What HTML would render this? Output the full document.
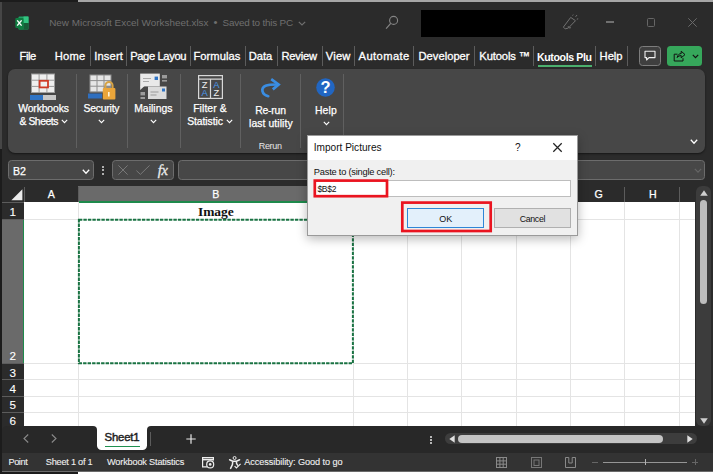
<!DOCTYPE html>
<html><head><meta charset="utf-8"><title>Excel - Import Pictures</title>
<style>
html,body{margin:0;padding:0;background:#1b1b1b;}
#root{position:relative;width:715px;height:474px;overflow:hidden;background:#262626;font-family:"Liberation Sans",sans-serif;}
.t{position:absolute;white-space:nowrap;line-height:1;transform:translateY(-50%);}
.r{position:absolute;box-sizing:border-box;}
svg{position:absolute;overflow:visible;}
</style></head><body><div id="root">
<div class="r" style="left:0.0px;top:0.0px;width:715.0px;height:474.0px;background:#1c1c1c;"></div>
<div class="r" style="left:0.0px;top:2.0px;width:2.0px;height:147.0px;background:#464646;"></div>
<div class="r" style="left:78.0px;top:0.0px;width:637.0px;height:1.8px;background:#a6a6a6;"></div>
<div class="r" style="left:78.0px;top:471.0px;width:637.0px;height:3.0px;background:#ffffff;"></div>
<div class="r" style="left:712.6px;top:0.0px;width:2.4px;height:474.0px;background:#ffffff;"></div>
<div class="r" style="left:2.0px;top:2.0px;width:710.6px;height:469.0px;background:#2b2b2b;"></div>
<svg style="left:14.5px;top:15.5px" width="14" height="14" viewBox="0 0 14 14">
<rect x="3.5" y="0.5" width="10" height="13" rx="1" fill="#21a366"/>
<rect x="8.5" y="0.5" width="5" height="6.5" fill="#33c481"/>
<rect x="3.5" y="7" width="5" height="6.5" fill="#107c41"/>
<rect x="8.5" y="7" width="5" height="6.5" fill="#185c37"/>
<rect x="0.3" y="2" width="8.2" height="10" rx="1" fill="#107c41"/>
<path d="M2.2 4.4 L6.6 9.6 M6.6 4.4 L2.2 9.6" stroke="#fff" stroke-width="1.4" fill="none"/>
</svg>
<span class="t" style="left:49.2px;top:22.8px;font-size:9.90px;color:#6f6f6f;font-weight:400;font-family:'Liberation Sans', sans-serif;letter-spacing:0.01px;">New Microsoft Excel Worksheet.xlsx</span>
<span class="t" style="left:213.5px;top:22.8px;font-size:11.42px;color:#6f6f6f;font-weight:400;font-family:'Liberation Sans', sans-serif;">•</span>
<span class="t" style="left:222.5px;top:22.8px;font-size:9.90px;color:#6f6f6f;font-weight:400;font-family:'Liberation Sans', sans-serif;letter-spacing:-0.20px;">Saved to this PC</span>
<svg style="left:298px;top:20.5px" width="8" height="5" viewBox="0 0 8 5"><path d="M0.8 0.8 L4 4 L7.2 0.8" stroke="#6f6f6f" stroke-width="1.2" fill="none"/></svg>
<svg style="left:385px;top:15px" width="14" height="14" viewBox="0 0 14 14"><circle cx="8.6" cy="5.4" r="4" stroke="#858585" stroke-width="1.1" fill="none"/><path d="M5.7 8.3 L1.1 13.6" stroke="#858585" stroke-width="1.2"/></svg>
<div class="r" style="left:420.6px;top:10.2px;width:124.2px;height:26.6px;background:#000;"></div>
<svg style="left:0;top:0" width="715" height="474"><g stroke="#727272" stroke-width="1" fill="none" stroke-linejoin="round"><path d="M570.7 17.4 L575.5 20.7 L568.4 28 L565.2 28.9 L563.4 27.1 Z"/><path d="M568.2 26.2 a1.6 1.6 0 0 0 2.8 1.2"/><path d="M572.6 15.6 L573.2 14.6 M575.6 16.8 L577 15 M576.8 19.2 L578.2 18.8"/></g></svg>
<div class="r" style="left:606.0px;top:21.4px;width:8.4px;height:1.4px;background:#707070;"></div>
<div class="r" style="left:646.5px;top:18.3px;width:8.5px;height:8.5px;background:transparent;border:1px solid #666;border-radius:1.5px;"></div>
<svg style="left:687.5px;top:18px" width="9" height="9" viewBox="0 0 9 9"><path d="M0.3 0.3 L8.7 8.7 M8.7 0.3 L0.3 8.7" stroke="#6a6a6a" stroke-width="1"/></svg>
<span class="t" style="left:19.5px;top:56.6px;font-size:11.20px;color:#ffffff;font-weight:400;font-family:'Liberation Sans', sans-serif;letter-spacing:-0.42px;-webkit-text-stroke:0.3px #fff;">File</span>
<span class="t" style="left:54.7px;top:56.6px;font-size:11.20px;color:#ffffff;font-weight:400;font-family:'Liberation Sans', sans-serif;letter-spacing:0.24px;-webkit-text-stroke:0.3px #fff;">Home</span>
<span class="t" style="left:94.3px;top:56.6px;font-size:11.20px;color:#ffffff;font-weight:400;font-family:'Liberation Sans', sans-serif;letter-spacing:0.12px;-webkit-text-stroke:0.3px #fff;">Insert</span>
<span class="t" style="left:130.2px;top:56.6px;font-size:11.20px;color:#ffffff;font-weight:400;font-family:'Liberation Sans', sans-serif;letter-spacing:-0.38px;-webkit-text-stroke:0.3px #fff;">Page Layou</span>
<span class="t" style="left:193.5px;top:56.6px;font-size:11.20px;color:#ffffff;font-weight:400;font-family:'Liberation Sans', sans-serif;letter-spacing:0.03px;-webkit-text-stroke:0.3px #fff;">Formulas</span>
<span class="t" style="left:248.8px;top:56.6px;font-size:11.20px;color:#ffffff;font-weight:400;font-family:'Liberation Sans', sans-serif;letter-spacing:-0.05px;-webkit-text-stroke:0.3px #fff;">Data</span>
<span class="t" style="left:281.4px;top:56.6px;font-size:11.20px;color:#ffffff;font-weight:400;font-family:'Liberation Sans', sans-serif;letter-spacing:-0.22px;-webkit-text-stroke:0.3px #fff;">Review</span>
<span class="t" style="left:325.7px;top:56.6px;font-size:11.20px;color:#ffffff;font-weight:400;font-family:'Liberation Sans', sans-serif;letter-spacing:0.24px;-webkit-text-stroke:0.3px #fff;">View</span>
<span class="t" style="left:358.6px;top:56.6px;font-size:11.20px;color:#ffffff;font-weight:400;font-family:'Liberation Sans', sans-serif;letter-spacing:0.39px;-webkit-text-stroke:0.3px #fff;">Automate</span>
<span class="t" style="left:418.5px;top:56.6px;font-size:11.20px;color:#ffffff;font-weight:400;font-family:'Liberation Sans', sans-serif;letter-spacing:0.01px;-webkit-text-stroke:0.3px #fff;">Developer</span>
<span class="t" style="left:479.3px;top:56.6px;font-size:11.20px;color:#ffffff;font-weight:400;font-family:'Liberation Sans', sans-serif;letter-spacing:-0.12px;-webkit-text-stroke:0.3px #fff;">Kutools ™</span>
<span class="t" style="left:599.6px;top:56.6px;font-size:11.20px;color:#ffffff;font-weight:400;font-family:'Liberation Sans', sans-serif;letter-spacing:-0.04px;-webkit-text-stroke:0.3px #fff;">Help</span>
<span class="t" style="left:537.0px;top:56.6px;font-size:10.60px;color:#ffffff;font-weight:700;font-family:'Liberation Sans', sans-serif;letter-spacing:-0.39px;">Kutools Plu</span>
<div class="r" style="left:537.5px;top:65.2px;width:54.5px;height:1.8px;background:#4caf6e;"></div>
<div class="r" style="left:90.1px;top:46.0px;width:1.0px;height:19.5px;background:#5c5c5c;"></div>
<div class="r" style="left:126.4px;top:46.0px;width:1.0px;height:19.5px;background:#5c5c5c;"></div>
<div class="r" style="left:189.7px;top:46.0px;width:1.0px;height:19.5px;background:#5c5c5c;"></div>
<div class="r" style="left:244.5px;top:46.0px;width:1.0px;height:19.5px;background:#5c5c5c;"></div>
<div class="r" style="left:276.8px;top:46.0px;width:1.0px;height:19.5px;background:#5c5c5c;"></div>
<div class="r" style="left:321.5px;top:46.0px;width:1.0px;height:19.5px;background:#5c5c5c;"></div>
<div class="r" style="left:354.1px;top:46.0px;width:1.0px;height:19.5px;background:#5c5c5c;"></div>
<div class="r" style="left:413.1px;top:46.0px;width:1.0px;height:19.5px;background:#5c5c5c;"></div>
<div class="r" style="left:474.4px;top:46.0px;width:1.0px;height:19.5px;background:#5c5c5c;"></div>
<div class="r" style="left:533.0px;top:46.0px;width:1.0px;height:19.5px;background:#5c5c5c;"></div>
<div class="r" style="left:594.5px;top:46.0px;width:1.0px;height:19.5px;background:#5c5c5c;"></div>
<div class="r" style="left:627.2px;top:46.0px;width:1.0px;height:19.5px;background:#5c5c5c;"></div>
<div class="r" style="left:638.5px;top:45.6px;width:22.0px;height:20.2px;background:#3f3f3f;border:1px solid #7d7d7d;border-radius:3.5px;"></div>
<svg style="left:643.5px;top:50px" width="12" height="12" viewBox="0 0 12 12"><path d="M1 1.2 H11 V7.6 H5 L2.6 10 V7.6 H1 Z" stroke="#f0f0f0" stroke-width="1.1" fill="none" stroke-linejoin="round"/></svg>
<div class="r" style="left:667.2px;top:45.6px;width:35.1px;height:20.2px;background:#36a75b;border-radius:3.5px;"></div>
<svg style="left:673px;top:49.5px" width="13" height="12" viewBox="0 0 13 12"><path d="M4.5 4.2 H1.2 V11 H10 V8.2 M4.2 7.6 C4.6 5 6.2 3.6 8.2 3.5 V1.2 L12 4.6 L8.2 7.8 V5.6 C6.6 5.6 5.2 6.2 4.2 7.6 Z" stroke="#111" stroke-width="1" fill="none" stroke-linejoin="round"/></svg>
<svg style="left:691.5px;top:54px" width="7" height="5" viewBox="0 0 7 5"><path d="M0.8 0.8 L3.5 3.6 L6.2 0.8" stroke="#111" stroke-width="1.2" fill="none"/></svg>
<div class="r" style="left:8.0px;top:69.2px;width:697.0px;height:83.6px;background:#474747;border-radius:7px;box-shadow:0 1px 2px rgba(0,0,0,.5);"></div>
<div class="r" style="left:75.5px;top:74.0px;width:1.0px;height:74.0px;background:#606060;"></div>
<div class="r" style="left:127.0px;top:74.0px;width:1.0px;height:74.0px;background:#606060;"></div>
<div class="r" style="left:179.5px;top:74.0px;width:1.0px;height:74.0px;background:#606060;"></div>
<div class="r" style="left:240.0px;top:74.0px;width:1.0px;height:74.0px;background:#606060;"></div>
<div class="r" style="left:300.0px;top:74.0px;width:1.0px;height:74.0px;background:#606060;"></div>
<div class="r" style="left:343.3px;top:74.0px;width:1.0px;height:74.0px;background:#606060;"></div>
<svg style="left:30px;top:73px" width="26" height="27" viewBox="0 0 26 27">
<rect x="1" y="0.5" width="24" height="19.5" fill="#9a9a9a"/>
<g fill="#efefef">
<rect x="2" y="1.5" width="6.6" height="5.2"/><rect x="9.6" y="1.5" width="6.8" height="5.2"/><rect x="17.4" y="1.5" width="6.6" height="5.2"/>
<rect x="2" y="7.7" width="6.6" height="5.2"/><rect x="9.6" y="7.7" width="6.8" height="5.2"/><rect x="17.4" y="7.7" width="6.6" height="5.2"/>
<rect x="2" y="13.9" width="6.6" height="5.2"/><rect x="9.6" y="13.9" width="6.8" height="5.2"/><rect x="17.4" y="13.9" width="6.6" height="5.2"/>
</g>
<rect x="9.6" y="7.8" width="8.4" height="6.6" fill="#f0f0f0" stroke="#cf3a25" stroke-width="1.8"/>
<rect x="0" y="22" width="13" height="5" fill="#2f74c5"/>
<rect x="13" y="22" width="13" height="5" fill="#c8c8c8"/>
</svg>
<span class="t" style="left:18.2px;top:108.6px;font-size:10.40px;color:#fff;font-weight:400;font-family:'Liberation Sans', sans-serif;letter-spacing:-0.13px;-webkit-text-stroke:0.25px #fff;">Workbooks</span>
<span class="t" style="left:19.5px;top:122.0px;font-size:10.40px;color:#fff;font-weight:400;font-family:'Liberation Sans', sans-serif;letter-spacing:-0.46px;-webkit-text-stroke:0.25px #fff;">&amp; Sheets</span>
<svg style="left:61px;top:119.3px" width="7" height="5" viewBox="0 0 7 5"><path d="M0.8 0.8 L3.5 3.6 L6.2 0.8" stroke="#fff" stroke-width="1.1" fill="none"/></svg>
<svg style="left:88px;top:74px" width="28" height="27" viewBox="0 0 28 27">
<rect x="1.5" y="0.5" width="22" height="18" fill="#8d8d8d"/>
<g fill="#e6e6e6">
<rect x="2.5" y="1.5" width="6" height="4.6"/><rect x="9.5" y="1.5" width="6" height="4.6"/><rect x="16.5" y="1.5" width="6" height="4.6"/>
<rect x="2.5" y="7.1" width="6" height="4.6"/><rect x="9.5" y="7.1" width="6" height="4.6"/><rect x="16.5" y="7.1" width="6" height="4.6"/>
<rect x="2.5" y="12.7" width="6" height="4.6"/><rect x="9.5" y="12.7" width="6" height="4.6"/>
</g>
<rect x="0" y="19.5" width="14" height="5" fill="#2f6fbf"/>
<path d="M17.4 15 V11.6 a3.6 3.6 0 0 1 7.2 0 V15" stroke="#d6a345" stroke-width="2" fill="none"/>
<rect x="14.8" y="14" width="12.6" height="11.6" rx="1" fill="#eaa53a"/>
<rect x="20" y="18" width="1.6" height="4.5" fill="#fff3d6"/>
</svg>
<span class="t" style="left:83.5px;top:108.6px;font-size:10.40px;color:#fff;font-weight:400;font-family:'Liberation Sans', sans-serif;letter-spacing:-0.22px;-webkit-text-stroke:0.25px #fff;">Security</span>
<svg style="left:98px;top:119.3px" width="7" height="5" viewBox="0 0 7 5"><path d="M0.8 0.8 L3.5 3.6 L6.2 0.8" stroke="#fff" stroke-width="1.1" fill="none"/></svg>
<svg style="left:139px;top:73px" width="29" height="28" viewBox="0 0 29 28">
<rect x="1.2" y="0.6" width="19.6" height="12.8" fill="#e9e9e9"/>
<path d="M1.2 13 V17 L5.5 13 Z" fill="#e9e9e9"/>
<rect x="15.6" y="3.6" width="3.4" height="3.4" fill="#2f74c5"/>
<rect x="4" y="5" width="8" height="1" fill="#aaa"/><rect x="4" y="8" width="6" height="1" fill="#aaa"/>
<rect x="23" y="2" width="5" height="3.4" fill="#9b9b9b"/><rect x="23" y="7" width="5" height="1.6" fill="#9b9b9b"/>
<rect x="9" y="13.5" width="18.5" height="12.5" fill="#dcdcdc"/>
<rect x="23" y="15.5" width="3" height="3" fill="#2f74c5"/>
<rect x="11.5" y="18.5" width="8" height="1" fill="#999"/><rect x="11.5" y="21.5" width="6" height="1" fill="#999"/>
<rect x="1.5" y="19" width="4.5" height="3.4" fill="#9b9b9b"/><rect x="1.5" y="24" width="4.5" height="2" fill="#9b9b9b"/>
</svg>
<span class="t" style="left:134.2px;top:108.6px;font-size:10.40px;color:#fff;font-weight:400;font-family:'Liberation Sans', sans-serif;letter-spacing:0.02px;-webkit-text-stroke:0.25px #fff;">Mailings</span>
<svg style="left:149.5px;top:119.3px" width="7" height="5" viewBox="0 0 7 5"><path d="M0.8 0.8 L3.5 3.6 L6.2 0.8" stroke="#fff" stroke-width="1.1" fill="none"/></svg>
<svg style="left:197.5px;top:74.5px" width="25" height="24" viewBox="0 0 25 24">
<rect x="0.6" y="0.6" width="23.8" height="22.8" fill="none" stroke="#d8d8d8" stroke-width="1.2"/>
<path d="M0.6 4.2 H24.4 M12.5 4.2 V23.4" stroke="#d8d8d8" stroke-width="1.2"/>
<text x="6.6" y="12.6" font-family="Liberation Sans, sans-serif" font-size="9.4" fill="#f0f0f0" text-anchor="middle">Z</text>
<text x="18.4" y="12.6" font-family="Liberation Sans, sans-serif" font-size="9.4" fill="#4a9bf0" text-anchor="middle">A</text>
<text x="6.6" y="21.4" font-family="Liberation Sans, sans-serif" font-size="9.4" fill="#4a9bf0" text-anchor="middle">A</text>
<text x="18.4" y="21.4" font-family="Liberation Sans, sans-serif" font-size="9.4" fill="#f0f0f0" text-anchor="middle">Z</text>
</svg>
<span class="t" style="left:193.2px;top:108.6px;font-size:10.40px;color:#fff;font-weight:400;font-family:'Liberation Sans', sans-serif;letter-spacing:0.08px;-webkit-text-stroke:0.25px #fff;">Filter &amp;</span>
<span class="t" style="left:187.2px;top:122.0px;font-size:10.40px;color:#fff;font-weight:400;font-family:'Liberation Sans', sans-serif;letter-spacing:-0.08px;-webkit-text-stroke:0.25px #fff;">Statistic</span>
<svg style="left:225.5px;top:119.3px" width="7" height="5" viewBox="0 0 7 5"><path d="M0.8 0.8 L3.5 3.6 L6.2 0.8" stroke="#fff" stroke-width="1.1" fill="none"/></svg>
<svg style="left:0;top:0" width="715" height="474"><g stroke="#3a8de2" fill="none" stroke-width="2.7"><path d="M268.2 96.2 C261.6 94.6 260.4 88.2 265.6 85.8 C268.6 84.5 272 84.5 277 84.5" stroke-linecap="round"/><path d="M271.2 79.2 L278.6 84.5 L272.8 89.4" stroke-linejoin="miter"/></g></svg>
<span class="t" style="left:255.2px;top:110.6px;font-size:10.40px;color:#fff;font-weight:400;font-family:'Liberation Sans', sans-serif;letter-spacing:-0.20px;-webkit-text-stroke:0.25px #fff;">Re-run</span>
<span class="t" style="left:249.0px;top:124.2px;font-size:10.40px;color:#fff;font-weight:400;font-family:'Liberation Sans', sans-serif;letter-spacing:0.08px;-webkit-text-stroke:0.25px #fff;">last utility</span>
<span class="t" style="left:258.7px;top:145.6px;font-size:9.00px;color:#e6e6e6;font-weight:400;font-family:'Liberation Sans', sans-serif;letter-spacing:-0.30px;">Rerun</span>
<svg style="left:316px;top:77.8px" width="19" height="19" viewBox="0 0 19 19">
<circle cx="9.5" cy="9.5" r="9.3" fill="#2166c2"/>
<text x="9.5" y="15.4" font-family="Liberation Sans, sans-serif" font-size="16.5" font-weight="700" fill="#fff" text-anchor="middle">?</text>
</svg>
<span class="t" style="left:315.0px;top:110.6px;font-size:10.40px;color:#fff;font-weight:400;font-family:'Liberation Sans', sans-serif;letter-spacing:0.10px;-webkit-text-stroke:0.25px #fff;">Help</span>
<svg style="left:322.5px;top:121px" width="7" height="5" viewBox="0 0 7 5"><path d="M0.8 0.8 L3.5 3.6 L6.2 0.8" stroke="#fff" stroke-width="1.1" fill="none"/></svg>
<svg style="left:689.5px;top:138.5px" width="8" height="6" viewBox="0 0 8 6"><path d="M0.8 0.8 L4 4.2 L7.2 0.8" stroke="#fff" stroke-width="1.3" fill="none"/></svg>
<div class="r" style="left:8.4px;top:160.3px;width:86.1px;height:20.2px;background:#474747;border:1px solid #6c6c6c;border-radius:3.5px;"></div>
<span class="t" style="left:13.0px;top:171.0px;font-size:10.60px;color:#fff;font-weight:400;font-family:'Liberation Sans', sans-serif;letter-spacing:0.03px;-webkit-text-stroke:0.25px #fff;">B2</span>
<svg style="left:82px;top:168.5px" width="8" height="6" viewBox="0 0 8 6"><path d="M0.8 0.8 L4 4.2 L7.2 0.8" stroke="#fff" stroke-width="1.3" fill="none"/></svg>
<div class="r" style="left:102.4px;top:165.8px;width:2.0px;height:2.0px;background:#dcdcdc;border-radius:1px;"></div>
<div class="r" style="left:102.4px;top:169.4px;width:2.0px;height:2.0px;background:#dcdcdc;border-radius:1px;"></div>
<div class="r" style="left:102.4px;top:173.0px;width:2.0px;height:2.0px;background:#dcdcdc;border-radius:1px;"></div>
<div class="r" style="left:112.0px;top:160.3px;width:62.4px;height:20.2px;background:#474747;border:1px solid #6c6c6c;border-radius:3.5px;"></div>
<svg style="left:117.6px;top:165.3px" width="10" height="10" viewBox="0 0 10 10"><path d="M0.4 0.4 L9.6 9.6 M9.6 0.4 L0.4 9.6" stroke="#787878" stroke-width="1"/></svg>
<svg style="left:136px;top:165.3px" width="14" height="10" viewBox="0 0 14 10"><path d="M0.4 5.6 L4.4 9.4 L13.6 0.4" stroke="#787878" stroke-width="1" fill="none"/></svg>
<span class="t" style="left:157.8px;top:169.8px;font-size:14.50px;color:#ececec;font-weight:400;font-family:'Liberation Serif', serif;letter-spacing:-0.28px;font-style:italic;-webkit-text-stroke:0.3px #ececec;">fx</span>
<div class="r" style="left:178.2px;top:160.3px;width:526.6px;height:20.2px;background:#474747;border:1px solid #6c6c6c;border-radius:3.5px;"></div>
<svg style="left:693.5px;top:167.5px" width="8" height="6" viewBox="0 0 8 6"><path d="M0.8 0.8 L4 4.2 L7.2 0.8" stroke="#666" stroke-width="1.1" fill="none"/></svg>
<div class="r" style="left:24.4px;top:202.0px;width:670.5px;height:223.6px;background:#ffffff;"></div>
<div class="r" style="left:2.0px;top:185.7px;width:692.9px;height:16.3px;background:#2b2b2b;"></div>
<div class="r" style="left:78.3px;top:185.7px;width:274.7px;height:16.3px;background:#6a6a6a;"></div>
<div class="r" style="left:78.3px;top:201.0px;width:274.7px;height:1.6px;background:#1e8a4c;"></div>
<svg style="left:10px;top:188.5px" width="13" height="12" viewBox="0 0 13 12"><path d="M12.4 0.3 V11.2 H1.4 Z" fill="#ebebeb"/></svg>
<div class="r" style="left:23.9px;top:187.0px;width:1.0px;height:15.0px;background:#5c5c5c;"></div>
<div class="r" style="left:77.8px;top:187.0px;width:1.0px;height:15.0px;background:#5c5c5c;"></div>
<div class="r" style="left:352.5px;top:187.0px;width:1.0px;height:15.0px;background:#5c5c5c;"></div>
<div class="r" style="left:406.9px;top:187.0px;width:1.0px;height:15.0px;background:#5c5c5c;"></div>
<div class="r" style="left:461.2px;top:187.0px;width:1.0px;height:15.0px;background:#5c5c5c;"></div>
<div class="r" style="left:515.6px;top:187.0px;width:1.0px;height:15.0px;background:#5c5c5c;"></div>
<div class="r" style="left:570.0px;top:187.0px;width:1.0px;height:15.0px;background:#5c5c5c;"></div>
<div class="r" style="left:624.4px;top:187.0px;width:1.0px;height:15.0px;background:#5c5c5c;"></div>
<div class="r" style="left:678.7px;top:187.0px;width:1.0px;height:15.0px;background:#5c5c5c;"></div>
<span class="t" style="left:41.3px;width:20px;text-align:center;top:194.3px;font-size:10.6px;color:#fff;-webkit-text-stroke:0.25px #fff">A</span>
<span class="t" style="left:205.8px;width:20px;text-align:center;top:194.3px;font-size:10.6px;color:#fff;-webkit-text-stroke:0.25px #fff">B</span>
<span class="t" style="left:588.6px;width:20px;text-align:center;top:194.3px;font-size:10.6px;color:#fff;-webkit-text-stroke:0.25px #fff">G</span>
<span class="t" style="left:642.8px;width:20px;text-align:center;top:194.3px;font-size:10.6px;color:#fff;-webkit-text-stroke:0.25px #fff">H</span>
<div class="r" style="left:2.0px;top:202.0px;width:22.4px;height:223.6px;background:#2b2b2b;"></div>
<div class="r" style="left:2.0px;top:219.0px;width:22.4px;height:144.6px;background:#6a6a6a;"></div>
<div class="r" style="left:23.0px;top:219.0px;width:1.4px;height:144.6px;background:#1e8a4c;"></div>
<div class="r" style="left:2.0px;top:201.5px;width:22.4px;height:1.0px;background:#5c5c5c;"></div>
<div class="r" style="left:2.0px;top:218.5px;width:22.4px;height:1.0px;background:#5c5c5c;"></div>
<div class="r" style="left:2.0px;top:363.1px;width:22.4px;height:1.0px;background:#5c5c5c;"></div>
<div class="r" style="left:2.0px;top:379.3px;width:22.4px;height:1.0px;background:#5c5c5c;"></div>
<div class="r" style="left:2.0px;top:395.6px;width:22.4px;height:1.0px;background:#5c5c5c;"></div>
<div class="r" style="left:2.0px;top:411.8px;width:22.4px;height:1.0px;background:#5c5c5c;"></div>
<span class="t" style="left:9.4px;top:212.4px;font-size:11.69px;color:#fff;font-weight:400;font-family:'Liberation Sans', sans-serif;-webkit-text-stroke:0.1px #fff;">1</span>
<span class="t" style="left:9.4px;top:356.2px;font-size:11.69px;color:#fff;font-weight:400;font-family:'Liberation Sans', sans-serif;-webkit-text-stroke:0.1px #fff;">2</span>
<span class="t" style="left:9.4px;top:372.6px;font-size:11.69px;color:#fff;font-weight:400;font-family:'Liberation Sans', sans-serif;-webkit-text-stroke:0.1px #fff;">3</span>
<span class="t" style="left:9.4px;top:388.8px;font-size:11.69px;color:#fff;font-weight:400;font-family:'Liberation Sans', sans-serif;-webkit-text-stroke:0.1px #fff;">4</span>
<span class="t" style="left:9.4px;top:405.2px;font-size:11.69px;color:#fff;font-weight:400;font-family:'Liberation Sans', sans-serif;-webkit-text-stroke:0.1px #fff;">5</span>
<span class="t" style="left:9.4px;top:421.4px;font-size:11.69px;color:#fff;font-weight:400;font-family:'Liberation Sans', sans-serif;-webkit-text-stroke:0.1px #fff;">6</span>
<div class="r" style="left:77.8px;top:202.0px;width:1.0px;height:223.6px;background:#e4e4e4;"></div>
<div class="r" style="left:352.5px;top:202.0px;width:1.0px;height:223.6px;background:#e4e4e4;"></div>
<div class="r" style="left:406.9px;top:202.0px;width:1.0px;height:223.6px;background:#e4e4e4;"></div>
<div class="r" style="left:461.2px;top:202.0px;width:1.0px;height:223.6px;background:#e4e4e4;"></div>
<div class="r" style="left:515.6px;top:202.0px;width:1.0px;height:223.6px;background:#e4e4e4;"></div>
<div class="r" style="left:570.0px;top:202.0px;width:1.0px;height:223.6px;background:#e4e4e4;"></div>
<div class="r" style="left:624.4px;top:202.0px;width:1.0px;height:223.6px;background:#e4e4e4;"></div>
<div class="r" style="left:678.7px;top:202.0px;width:1.0px;height:223.6px;background:#e4e4e4;"></div>
<div class="r" style="left:24.4px;top:218.5px;width:670.5px;height:1.0px;background:#e4e4e4;"></div>
<div class="r" style="left:24.4px;top:363.1px;width:670.5px;height:1.0px;background:#e4e4e4;"></div>
<div class="r" style="left:24.4px;top:379.3px;width:670.5px;height:1.0px;background:#e4e4e4;"></div>
<div class="r" style="left:24.4px;top:395.6px;width:670.5px;height:1.0px;background:#e4e4e4;"></div>
<div class="r" style="left:24.4px;top:411.8px;width:670.5px;height:1.0px;background:#e4e4e4;"></div>
<span class="t" style="left:197.9px;top:212.0px;font-size:13.47px;color:#111;font-weight:700;font-family:'Liberation Serif', serif;">Image</span>
<svg style="left:0;top:0" width="715" height="474"><rect x="78.9" y="219.7" width="274" height="143.6" fill="#fff" stroke="#1a7343" stroke-width="2" stroke-dasharray="3.4 1.1"/></svg>
<div class="r" style="left:696.0px;top:186.2px;width:15.0px;height:240.2px;background:#3c3c3c;border-radius:6px;"></div>
<svg style="left:699.7px;top:190px" width="8" height="6" viewBox="0 0 8 6"><path d="M4 0.3 L7.8 5.7 H0.2 Z" fill="#d0d0d0"/></svg>
<div class="r" style="left:700.1px;top:200.0px;width:7.3px;height:104.2px;background:#bdbdbd;border-radius:3.6px;"></div>
<svg style="left:699.9px;top:417.8px" width="8" height="6" viewBox="0 0 8 6"><path d="M4 5.7 L7.8 0.3 H0.2 Z" fill="#d0d0d0"/></svg>
<div class="r" style="left:88.0px;top:425.0px;width:72.0px;height:8.0px;background:#ffffff;"></div>
<div class="r" style="left:2.0px;top:425.8px;width:95.4px;height:26.8px;background:#282828;border-radius:5px 4px 0 0;"></div>
<div class="r" style="left:146.8px;top:425.8px;width:565.8px;height:26.8px;background:#282828;border-radius:4px 0 0 0;"></div>
<div class="r" style="left:90.0px;top:433.0px;width:70.0px;height:19.6px;background:#282828;"></div>
<div class="r" style="left:97.4px;top:425.6px;width:49.4px;height:24.2px;background:#ffffff;border-radius:0 0 4.5px 4.5px;"></div>
<span class="t" style="left:104.6px;top:438.3px;font-size:11.40px;color:#1e1e1e;font-weight:400;font-family:'Liberation Sans', sans-serif;letter-spacing:-0.23px;-webkit-text-stroke:0.45px #1e1e1e;">Sheet1</span>
<div class="r" style="left:104.6px;top:445.7px;width:35.0px;height:1.5px;background:#1f9150;"></div>
<div class="r" style="left:150.0px;top:432.0px;width:1.0px;height:14.0px;background:#5c5c5c;"></div>
<svg style="left:22.5px;top:434px" width="6" height="9" viewBox="0 0 6 9"><path d="M5.2 0.5 L1 4.5 L5.2 8.5" stroke="#8a8a8a" stroke-width="1.1" fill="none"/></svg>
<svg style="left:50.5px;top:434px" width="6" height="9" viewBox="0 0 6 9"><path d="M0.8 0.5 L5 4.5 L0.8 8.5" stroke="#8a8a8a" stroke-width="1.1" fill="none"/></svg>
<svg style="left:186px;top:433.5px" width="10" height="10" viewBox="0 0 10 10"><path d="M5 0.3 V9.7 M0.3 5 H9.7" stroke="#e8e8e8" stroke-width="1.2"/></svg>
<div class="r" style="left:429.5px;top:436.0px;width:2.0px;height:2.0px;background:#e6e6e6;border-radius:1px;"></div>
<div class="r" style="left:429.5px;top:438.9px;width:2.0px;height:2.0px;background:#e6e6e6;border-radius:1px;"></div>
<div class="r" style="left:429.5px;top:441.8px;width:2.0px;height:2.0px;background:#e6e6e6;border-radius:1px;"></div>
<div class="r" style="left:445.2px;top:433.4px;width:251.4px;height:11.0px;background:#3d3d3d;border-radius:5.5px;"></div>
<svg style="left:449px;top:435px" width="6" height="8" viewBox="0 0 6 8"><path d="M0.3 4 L5.7 0.2 V7.8 Z" fill="#e0e0e0"/></svg>
<div class="r" style="left:457.8px;top:434.8px;width:205.2px;height:8.2px;background:#c4c4c4;border-radius:4.2px;"></div>
<svg style="left:686.5px;top:435px" width="6" height="8" viewBox="0 0 6 8"><path d="M5.7 4 L0.3 0.2 V7.8 Z" fill="#e0e0e0"/></svg>
<div class="r" style="left:2.0px;top:452.6px;width:711.0px;height:18.4px;background:#333333;"></div>
<div class="r" style="left:2.0px;top:470.6px;width:711.0px;height:0.8px;background:#6a6a6a;"></div>
<span class="t" style="left:8.5px;top:463.0px;font-size:9.20px;color:#f0f0f0;font-weight:400;font-family:'Liberation Sans', sans-serif;letter-spacing:-0.44px;-webkit-text-stroke:0.1px #f0f0f0;">Point</span>
<span class="t" style="left:45.8px;top:463.0px;font-size:9.20px;color:#f0f0f0;font-weight:400;font-family:'Liberation Sans', sans-serif;letter-spacing:-0.24px;-webkit-text-stroke:0.1px #f0f0f0;">Sheet 1 of 1</span>
<span class="t" style="left:107.0px;top:463.0px;font-size:9.20px;color:#f0f0f0;font-weight:400;font-family:'Liberation Sans', sans-serif;letter-spacing:-0.18px;-webkit-text-stroke:0.1px #f0f0f0;">Workbook Statistics</span>
<svg style="left:0;top:0" width="715" height="474"><g stroke="#ededed" fill="none" stroke-width="1.2">
<path d="M207 466.8 H202.6 V457.6 H213.4 V460.6"/><path d="M202.6 459.6 H213.4" stroke-width="1.6"/>
<circle cx="210.2" cy="464.4" r="3.5"/><circle cx="210.2" cy="464.4" r="1.3" fill="#ededed" stroke="none"/>
<circle cx="234.6" cy="458" r="1.5" stroke-width="1"/>
<path d="M229.6 459.8 L232.8 461.2 L232.4 464.6 L230.6 468.4 M239.6 459.8 L236.4 461.2 L236.6 463.6 L237.6 465.2 M232.8 461.2 H236.4" stroke-width="1.5" stroke-linecap="round" stroke-linejoin="round"/>
<path d="M234.6 466.2 L236.4 468 L240.6 463.8" stroke-width="1.2"/>
</g></svg>
<span class="t" style="left:244.2px;top:463.0px;font-size:9.20px;color:#f0f0f0;font-weight:400;font-family:'Liberation Sans', sans-serif;letter-spacing:-0.09px;-webkit-text-stroke:0.1px #f0f0f0;">Accessibility: Good to go</span>
<svg style="left:495.6px;top:456.6px" width="11" height="11" viewBox="0 0 11 11"><rect x="0.5" y="0.5" width="10" height="10" fill="none" stroke="#8a8a8a"/><path d="M3.9 0.5 V10.5 M7.2 0.5 V10.5 M0.5 3.9 H10.5 M0.5 7.2 H10.5" stroke="#8a8a8a"/></svg>
<svg style="left:530.5px;top:456.6px" width="11" height="11" viewBox="0 0 11 11"><rect x="0.5" y="0.5" width="10" height="10" fill="none" stroke="#777"/><rect x="3" y="3" width="5" height="5.5" fill="none" stroke="#777"/></svg>
<svg style="left:564.5px;top:456.6px" width="11" height="11" viewBox="0 0 11 11"><path d="M0.5 0.5 H3.8 V6 H7.2 V0.5 H10.5 V10.5 H0.5 Z" fill="none" stroke="#8a8a8a"/></svg>
<div class="r" style="left:592.0px;top:461.6px;width:6.0px;height:1.0px;background:#666;"></div>
<div class="r" style="left:602.6px;top:461.7px;width:84.9px;height:0.8px;background:#959595;"></div>
<div class="r" style="left:644.8px;top:458.8px;width:1.0px;height:6.6px;background:#b0b0b0;"></div>
<div class="r" style="left:692.0px;top:461.6px;width:6.0px;height:1.0px;background:#666;"></div>
<div class="r" style="left:694.5px;top:459.0px;width:1.0px;height:6.2px;background:#666;"></div>
<div class="r" style="left:307.0px;top:134.8px;width:271.0px;height:101.0px;background:#f0f0f0;border:1px solid #9a9a9a;box-shadow:0 3px 10px rgba(0,0,0,.28);"></div>
<div class="r" style="left:308.0px;top:135.8px;width:269.0px;height:23.8px;background:#ffffff;"></div>
<span class="t" style="left:313.8px;top:148.0px;font-size:10.10px;color:#111;font-weight:400;font-family:'Liberation Sans', sans-serif;letter-spacing:-0.01px;">Import Pictures</span>
<span class="t" style="left:515.0px;top:148.0px;font-size:10.07px;color:#111;font-weight:400;font-family:'Liberation Sans', sans-serif;">?</span>
<svg style="left:552.5px;top:143px" width="9" height="9" viewBox="0 0 9 9"><path d="M0.3 0.3 L8.7 8.7 M8.7 0.3 L0.3 8.7" stroke="#222" stroke-width="1.25"/></svg>
<span class="t" style="left:313.8px;top:173.4px;font-size:9.30px;color:#111;font-weight:400;font-family:'Liberation Sans', sans-serif;letter-spacing:-0.23px;">Paste to (single cell):</span>
<div class="r" style="left:314.0px;top:180.4px;width:257.0px;height:17.0px;background:#ffffff;border:1px solid #bdbdbd;"></div>
<span class="t" style="left:317.4px;top:189.2px;font-size:8.50px;color:#111;font-weight:400;font-family:'Liberation Sans', sans-serif;letter-spacing:-0.28px;">$B$2</span>
<div class="r" style="left:407.2px;top:207.8px;width:76.8px;height:20.2px;background:#e3f0fb;border:1px solid #2f86d6;"></div>
<span class="t" style="left:439.3px;top:218.9px;font-size:9.00px;color:#111;font-weight:400;font-family:'Liberation Sans', sans-serif;">OK</span>
<div class="r" style="left:494.2px;top:207.8px;width:76.8px;height:20.2px;background:#e1e1e1;border:1px solid #b0b0b0;"></div>
<span class="t" style="left:519.8px;top:218.9px;font-size:8.80px;color:#111;font-weight:400;font-family:'Liberation Sans', sans-serif;letter-spacing:-0.36px;">Cancel</span>
<svg style="left:0;top:0" width="715" height="474"><g fill="none" stroke="#ea1420" stroke-width="2.7"><rect x="314.8" y="180.6" width="72.2" height="15.6"/><rect x="402.3" y="202.6" width="88.4" height="28.4"/></g></svg>
</div></body></html>
